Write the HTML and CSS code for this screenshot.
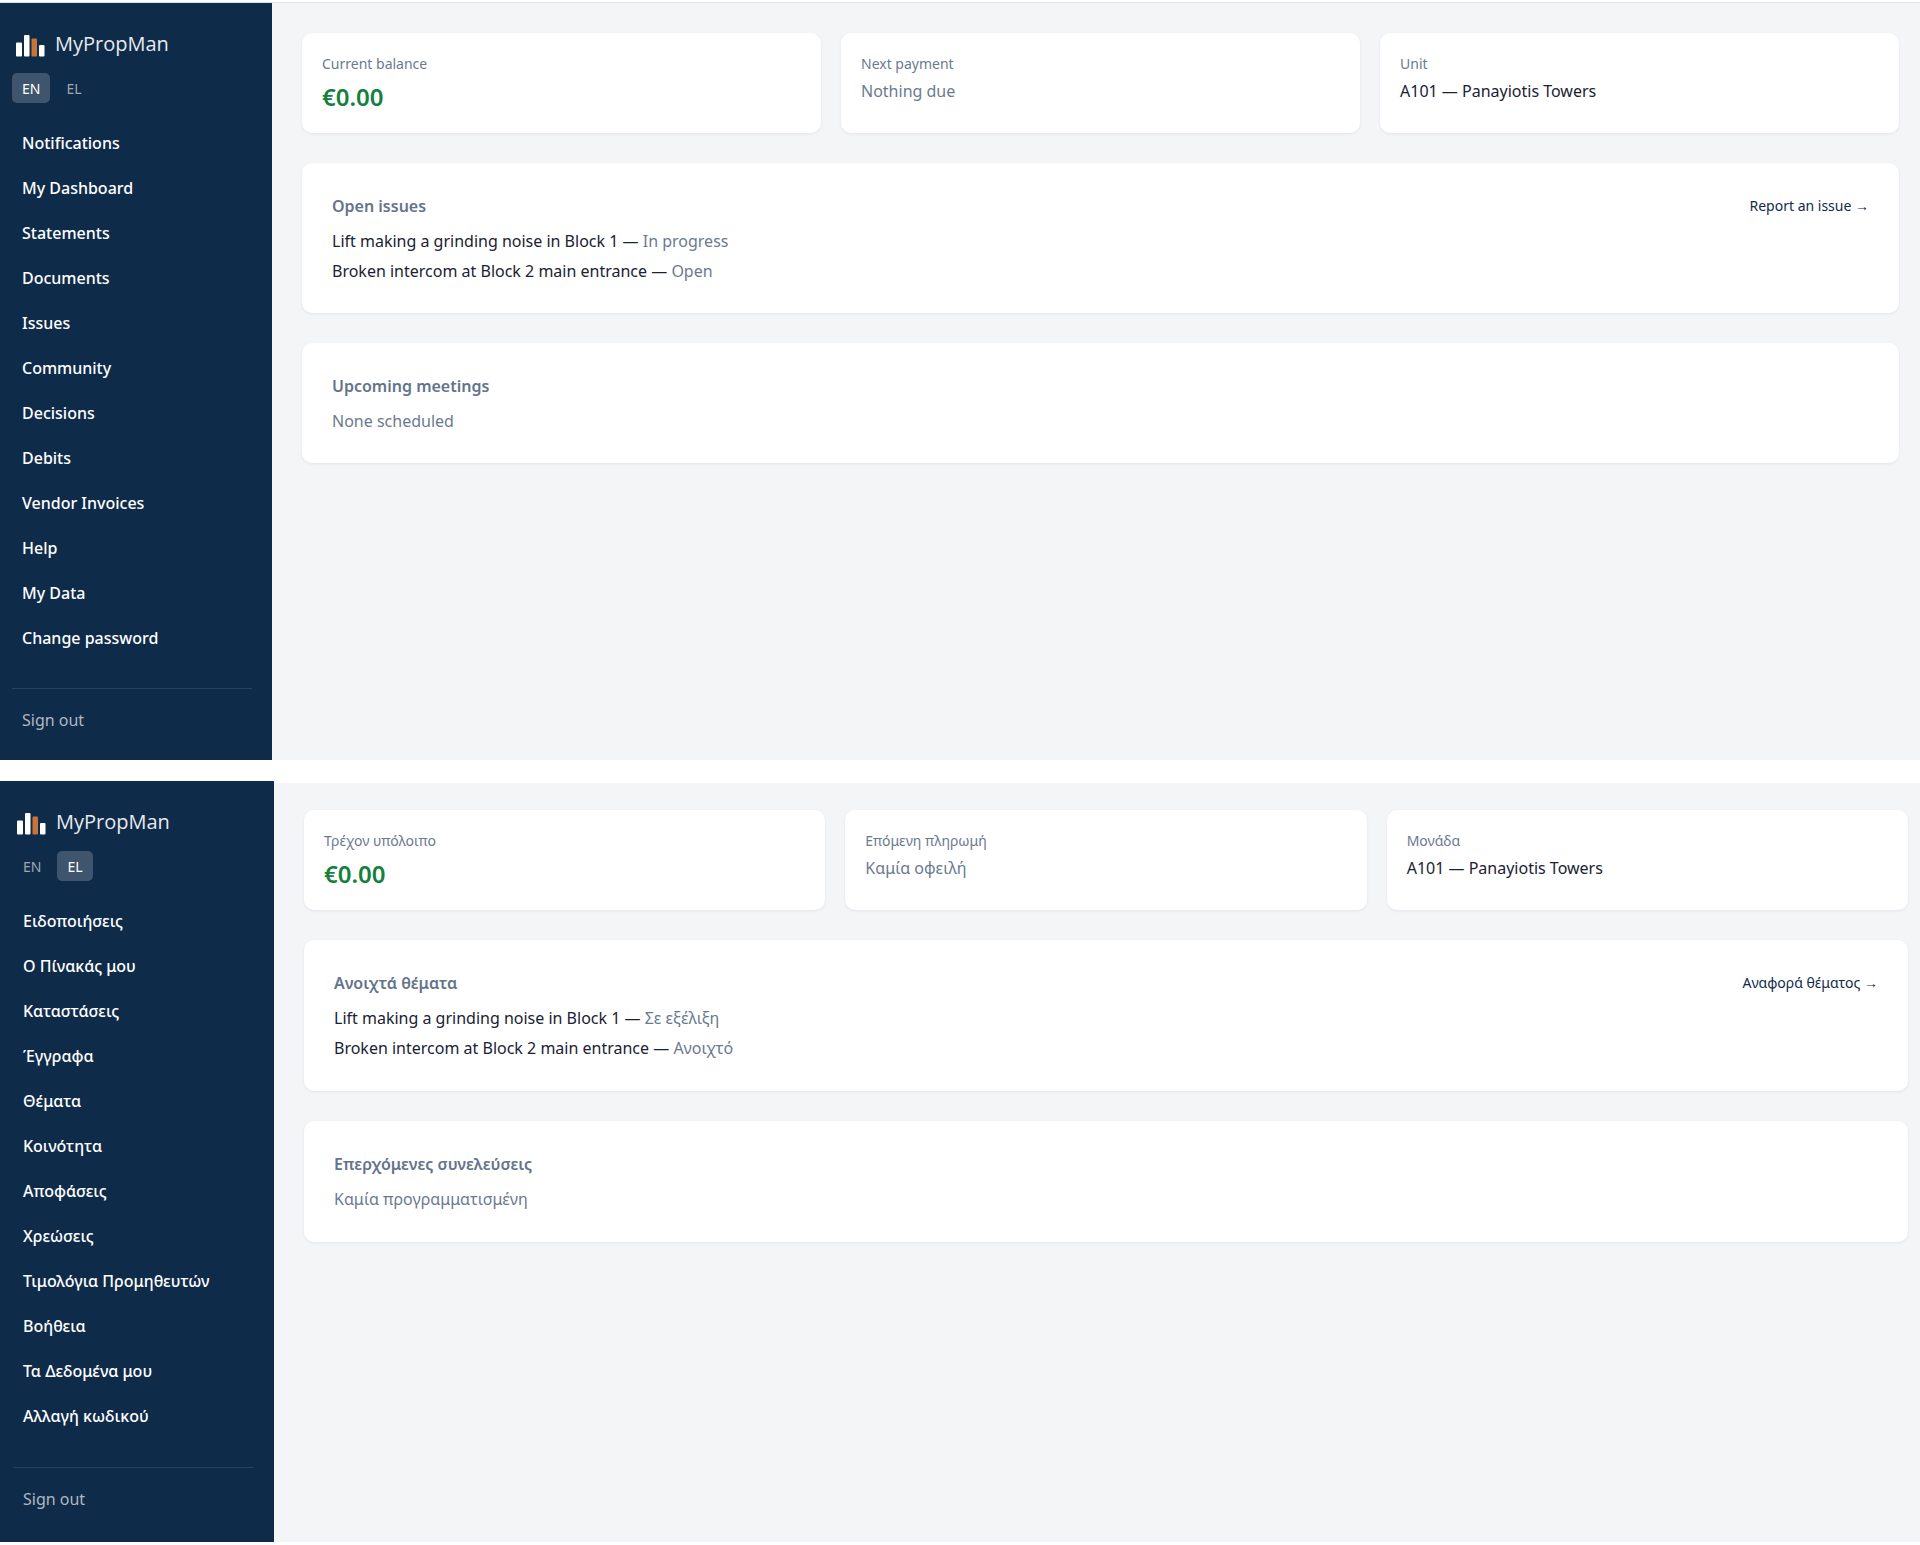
FILE: index.html
```
<!DOCTYPE html>
<html lang="en">
<head>
  <meta charset="UTF-8">
  <meta name="viewport" content="width=device-width, initial-scale=1.0">
  <title>MyPropMan</title>
  <link rel="stylesheet" href="styles.css">
</head>
<body>
  <div class="portal portal--en">
    <aside class="sidebar">
      <div class="brand">
        <svg class="brand__logo" width="30" height="24" viewBox="0 0 30 24" aria-hidden="true">
          <rect x="0" y="8.500" width="6" height="14" rx="1" fill="#fff"/>
          <rect x="8" y="1" width="5.500" height="21.500" rx="1" fill="#fff"/>
          <rect x="15.500" y="4.500" width="5.500" height="18" rx="1" fill="#c8733a"/>
          <rect x="23" y="11" width="5.500" height="11.500" rx="1" fill="#fff"/>
        </svg>
        <span class="brand__name">MyPropMan</span>
      </div>
      <div class="lang">
        <button class="lang__btn lang__btn--active" type="button">EN</button>
        <button class="lang__btn" type="button">EL</button>
      </div>
      <nav class="nav">
        <a class="nav__link" href="#">Notifications</a>
        <a class="nav__link" href="#">My Dashboard</a>
        <a class="nav__link" href="#">Statements</a>
        <a class="nav__link" href="#">Documents</a>
        <a class="nav__link" href="#">Issues</a>
        <a class="nav__link" href="#">Community</a>
        <a class="nav__link" href="#">Decisions</a>
        <a class="nav__link" href="#">Debits</a>
        <a class="nav__link" href="#">Vendor Invoices</a>
        <a class="nav__link" href="#">Help</a>
        <a class="nav__link" href="#">My Data</a>
        <a class="nav__link" href="#">Change password</a>
      </nav>
      <div class="sidebar__footer">
        <button class="signout" type="button">Sign out</button>
      </div>
    </aside>
    <main class="content">
      <div class="stats">
        <div class="card stat">
          <div class="stat__label">Current balance</div>
          <div class="stat__amount">€0.00</div>
        </div>
        <div class="card stat">
          <div class="stat__label">Next payment</div>
          <div class="muted">Nothing due</div>
        </div>
        <div class="card stat">
          <div class="stat__label">Unit</div>
          <div>A101 — Panayiotis Towers</div>
        </div>
      </div>
      <section class="card panel">
        <div class="panel__head">
          <h2 class="panel__title">Open issues</h2>
          <a class="panel__link" href="#">Report an issue →</a>
        </div>
        <ul class="issues">
          <li>Lift making a grinding noise in Block 1 — <span class="muted">In progress</span></li>
          <li>Broken intercom at Block 2 main entrance — <span class="muted">Open</span></li>
        </ul>
      </section>
      <section class="card panel">
        <div class="panel__head">
          <h2 class="panel__title">Upcoming meetings</h2>
        </div>
        <p class="panel__text muted">None scheduled</p>
      </section>
    </main>
  </div>

  <div class="portal portal--el" lang="el">
    <aside class="sidebar">
      <div class="brand">
        <svg class="brand__logo" width="30" height="24" viewBox="0 0 30 24" aria-hidden="true">
          <rect x="0" y="8.500" width="6" height="14" rx="1" fill="#fff"/>
          <rect x="8" y="1" width="5.500" height="21.500" rx="1" fill="#fff"/>
          <rect x="15.500" y="4.500" width="5.500" height="18" rx="1" fill="#c8733a"/>
          <rect x="23" y="11" width="5.500" height="11.500" rx="1" fill="#fff"/>
        </svg>
        <span class="brand__name">MyPropMan</span>
      </div>
      <div class="lang">
        <button class="lang__btn" type="button">EN</button>
        <button class="lang__btn lang__btn--active" type="button">EL</button>
      </div>
      <nav class="nav">
        <a class="nav__link" href="#">Ειδοποιήσεις</a>
        <a class="nav__link" href="#">Ο Πίνακάς μου</a>
        <a class="nav__link" href="#">Καταστάσεις</a>
        <a class="nav__link" href="#">Έγγραφα</a>
        <a class="nav__link" href="#">Θέματα</a>
        <a class="nav__link" href="#">Κοινότητα</a>
        <a class="nav__link" href="#">Αποφάσεις</a>
        <a class="nav__link" href="#">Χρεώσεις</a>
        <a class="nav__link" href="#">Τιμολόγια Προμηθευτών</a>
        <a class="nav__link" href="#">Βοήθεια</a>
        <a class="nav__link" href="#">Τα Δεδομένα μου</a>
        <a class="nav__link" href="#">Αλλαγή κωδικού</a>
      </nav>
      <div class="sidebar__footer">
        <button class="signout" type="button">Sign out</button>
      </div>
    </aside>
    <main class="content">
      <div class="stats">
        <div class="card stat">
          <div class="stat__label">Τρέχον υπόλοιπο</div>
          <div class="stat__amount">€0.00</div>
        </div>
        <div class="card stat">
          <div class="stat__label">Επόμενη πληρωμή</div>
          <div class="muted">Καμία οφειλή</div>
        </div>
        <div class="card stat">
          <div class="stat__label">Μονάδα</div>
          <div>A101 — Panayiotis Towers</div>
        </div>
      </div>
      <section class="card panel">
        <div class="panel__head">
          <h2 class="panel__title">Ανοιχτά θέματα</h2>
          <a class="panel__link" href="#">Αναφορά θέματος →</a>
        </div>
        <ul class="issues">
          <li>Lift making a grinding noise in Block 1 — <span class="muted">Σε εξέλιξη</span></li>
          <li>Broken intercom at Block 2 main entrance — <span class="muted">Ανοιχτό</span></li>
        </ul>
      </section>
      <section class="card panel">
        <div class="panel__head">
          <h2 class="panel__title">Επερχόμενες συνελεύσεις</h2>
        </div>
        <p class="panel__text muted">Καμία προγραμματισμένη</p>
      </section>
    </main>
  </div>
</body>
</html>
```
FILE: styles.css
```
* {
  box-sizing: border-box;
}
body {
  margin: 0;
  background-color: #fff;
  color: #1a2233;
  font-family: 'Segoe UI', 'Noto Sans', sans-serif;
  font-size: 16px;
  line-height: 30px;
}
a {
  text-decoration: none;
}
button {
  border: 0;
  background: none;
  font-family: inherit;
  cursor: pointer;
}
.portal {
  display: flex;
}
.portal--en {
  margin-top: 2px;
  border-top: 1px solid #dfe3e3;
}
.portal--el {
  margin-top: 21px;
}

/* sidebar */
.sidebar {
  flex: none;
  width: 272px;
  padding: 29px 20px 25px 12px;
  background-color: #0f2b4a;
}
.portal--el .sidebar {
  width: 274px;
  padding-left: 13px;
  padding-bottom: 28px;
}
.brand {
  display: flex;
  gap: 9px;
  height: 30px;
  padding-top: 2px;
  padding-left: 4px;
}
.brand__name {
  color: #e7eaed;
  font-family: 'Open Sans', sans-serif;
  font-size: 20px;
  line-height: 20px;
}
.lang {
  display: flex;
  gap: 6px;
  margin-top: 11px;
}
.lang__btn {
  height: 30px;
  padding: 0 10px;
  border-radius: 5px;
  color: #9fa8b2;
  font-size: 14px;
}
.lang__btn--active {
  background-color: #3f556e;
  color: #fff;
}
.nav {
  display: flex;
  flex-direction: column;
  gap: 15px;
  margin-top: 25px;
}
.nav__link {
  padding: 0 10px;
  color: #fff;
  font-weight: 500;
}
.sidebar__footer {
  margin-top: 35px;
  padding-top: 16px;
  border-top: 1px solid #27405c;
}
.portal--el .sidebar__footer {
  margin-top: 36px;
}
.signout {
  display: block;
  padding: 0 10px;
  color: #b0b8c1;
  font-size: 16px;
  line-height: 30px;
}

/* content */
.content {
  flex: 1;
  padding: 30px 21px 30px 30px;
  background-color: #f4f5f7;
}
.portal--el .content {
  padding-top: 27px;
  padding-right: 12px;
  border-top: 2px solid #fff;
}
.card {
  border-radius: 10px;
  background-color: #fff;
  box-shadow: 0 1px 3px rgba(15, 43, 74, .08);
}
.muted {
  color: #6b7a90;
}
.stats {
  display: grid;
  grid-template-columns: repeat(3, 1fr);
  gap: 20px;
}
.stat {
  padding: 20px 20px 14px;
  line-height: 32px;
}
.stat__label {
  color: #6b7a90;
  font-size: 14px;
  line-height: 22px;
}
.stat__amount {
  color: #15803d;
  font-size: 24px;
  font-weight: 600;
  line-height: 44px;
}
.panel {
  margin-top: 30px;
  padding: 28px 30px 27px;
}
.portal--el .panel {
  padding-bottom: 28px;
}
.panel__head {
  display: flex;
  justify-content: space-between;
  margin-bottom: 5px;
}
.panel__title {
  margin: 0;
  color: #64748b;
  font-size: 16px;
  font-weight: 600;
}
.panel__link {
  color: #0f2b4a;
  font-size: 14px;
}
.panel__text {
  margin: 0;
}
.issues {
  margin: 0;
  padding: 0;
  list-style: none;
}
```
